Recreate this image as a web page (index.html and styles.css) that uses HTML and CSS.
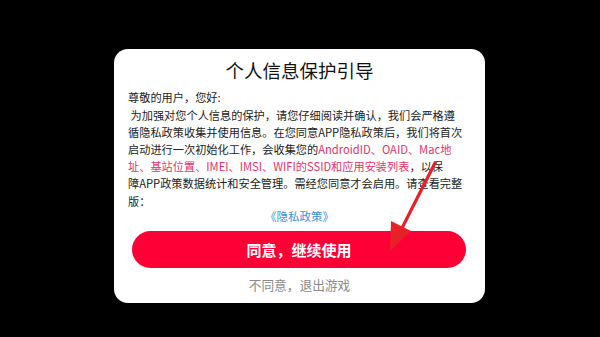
FILE: index.html
```html
<!DOCTYPE html>
<html lang="zh-CN">
<head>
<meta charset="utf-8">
<title>个人信息保护引导</title>
<link rel="stylesheet" href="styles.css">
</head>
<body>
<div class="screen">
  <div class="card">
    <div class="title">个人信息保护引导</div>
    <div class="body">
      尊敬的用户，您好:<br>
      &nbsp;为加强对您个人信息的保护，请您仔细阅读并确认，我们会严格遵<br>
      循隐私政策收集并使用信息。在您同意APP隐私政策后，我们将首次<br>
      启动进行一次初始化工作，会收集您的<span class="hl">AndroidID、OAID、Mac地</span><br>
      <span class="hl">址、基站位置、IMEI、IMSI、WIFI的SSID和应用安装列表</span>，以保<br>
      障APP政策数据统计和安全管理。需经您同意才会启用。请查看完整<br>
      版：
    </div>
    <div class="link">《隐私政策》</div>
    <button class="agree">同意，继续使用</button>
    <div class="refuse">不同意，退出游戏</div>
  </div>
  <svg class="arrow" width="600" height="337" viewBox="0 0 600 337">
    <line x1="435" y1="163" x2="402" y2="228" stroke="#e8202a" stroke-width="3.2" stroke-linecap="round"/>
    <polygon points="390,251 391,221 411,231" fill="#e8202a"/>
  </svg>
</div>
</body>
</html>
```

FILE: styles.css
```css
html, body {
  margin: 0;
  padding: 0;
  background: #000;
}
.screen {
  position: relative;
  width: 600px;
  height: 337px;
  background: #000;
  padding: 49px 0 0 114px;
  box-sizing: border-box;
  font-family: "Noto Sans CJK SC", "Noto Sans", sans-serif;
}
.card {
  width: 371px;
  height: 254px;
  box-sizing: border-box;
  background: #fff;
  border-radius: 14px;
  padding: 8px 0 8px 0;
  display: flex;
  flex-direction: column;
}
.title {
  text-align: center;
  font-size: 18.5px;
  line-height: 26px;
  color: #111;
  height: 26px;
}
.body {
  margin-top: 6.4px;
  padding-left: 14px;
  font-size: 11.2px;
  line-height: 17.2px;
  color: #222;
  white-space: nowrap;
}
.hl {
  color: #e5336a;
}
.link {
  text-align: center;
  font-size: 11.5px;
  line-height: 12px;
  height: 12px;
  color: #3b8fdc;
}
.agree {
  margin: 9.2px 0 0 18px;
  width: 334px;
  height: 37px;
  border: none;
  border-radius: 19px;
  background: #ff0036;
  color: #fff;
  font-family: inherit;
  font-size: 15px;
  font-weight: 700;
  padding: 0;
  cursor: pointer;
}
.refuse {
  margin-top: 7px;
  text-align: center;
  font-size: 12.7px;
  line-height: 20px;
  color: #8a8a8a;
}
.arrow {
  position: absolute;
  left: 0;
  top: 0;
  pointer-events: none;
}
```
